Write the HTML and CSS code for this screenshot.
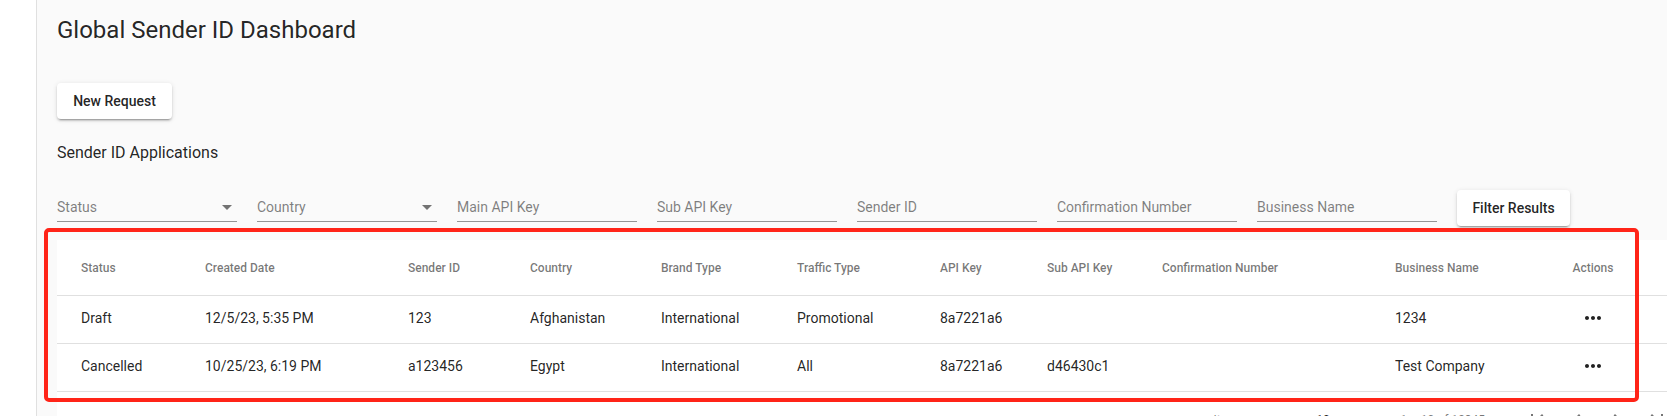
FILE: index.html
```html
<!DOCTYPE html>
<html lang="en">
<head>
<meta charset="utf-8">
<title>Global Sender ID Dashboard</title>
<link rel="stylesheet" href="styles.css">
</head>
<body>
<div class="app">
  <aside class="sidebar"></aside>
  <main class="main">
    <h1 class="title">Global Sender ID Dashboard</h1>
    <button class="raised-btn new-btn" type="button">New Request</button>
    <h2 class="subtitle">Sender ID Applications</h2>

    <div class="filters">
      <div class="field select-field"><span class="ph">Status</span><span class="arrow"></span></div>
      <div class="field select-field"><span class="ph">Country</span><span class="arrow"></span></div>
      <div class="field"><span class="ph">Main API Key</span></div>
      <div class="field"><span class="ph">Sub API Key</span></div>
      <div class="field"><span class="ph">Sender ID</span></div>
      <div class="field"><span class="ph">Confirmation Number</span></div>
      <div class="field"><span class="ph">Business Name</span></div>
      <button class="raised-btn filter-btn" type="button">Filter Results</button>
    </div>

    <div class="card">
      <table class="grid">
        <colgroup>
          <col class="c-status"><col class="c-created"><col class="c-sender"><col class="c-country">
          <col class="c-brand"><col class="c-traffic"><col class="c-api"><col class="c-subapi">
          <col class="c-conf"><col class="c-biz"><col class="c-actions"><col class="c-fill">
        </colgroup>
        <thead>
          <tr>
            <th>Status</th><th>Created Date</th><th>Sender ID</th><th>Country</th>
            <th>Brand Type</th><th>Traffic Type</th><th>API Key</th><th>Sub API Key</th>
            <th>Confirmation Number</th><th>Business Name</th><th class="center">Actions</th><th></th>
          </tr>
        </thead>
        <tbody>
          <tr>
            <td>Draft</td><td>12/5/23, 5:35 PM</td><td>123</td><td>Afghanistan</td>
            <td>International</td><td>Promotional</td><td>8a7221a6</td><td></td>
            <td></td><td>1234</td>
            <td class="center"><svg class="more" viewBox="0 0 24 24" width="24" height="24"><path d="M6 10c-1.1 0-2 .9-2 2s.9 2 2 2 2-.9 2-2-.9-2-2-2zm12 0c-1.1 0-2 .9-2 2s.9 2 2 2 2-.9 2-2-.9-2-2-2zm-6 0c-1.1 0-2 .9-2 2s.9 2 2 2 2-.9 2-2-.9-2-2-2z"/></svg></td><td></td>
          </tr>
          <tr>
            <td>Cancelled</td><td>10/25/23, 6:19 PM</td><td>a123456</td><td>Egypt</td>
            <td>International</td><td>All</td><td>8a7221a6</td><td>d46430c1</td>
            <td></td><td>Test Company</td>
            <td class="center"><svg class="more" viewBox="0 0 24 24" width="24" height="24"><path d="M6 10c-1.1 0-2 .9-2 2s.9 2 2 2 2-.9 2-2-.9-2-2-2zm12 0c-1.1 0-2 .9-2 2s.9 2 2 2 2-.9 2-2-.9-2-2-2zm-6 0c-1.1 0-2 .9-2 2s.9 2 2 2 2-.9 2-2-.9-2-2-2z"/></svg></td><td></td>
          </tr>
        </tbody>
      </table>
      <div class="paginator">
        <span class="pg-label">Items per page:</span>
        <span class="pg-select">10<span class="arrow small"></span></span>
        <span class="pg-range">1 – 10 of 12345</span>
        <span class="pg-btn"><svg viewBox="0 0 24 24" width="24" height="24"><path d="M18.41 16.59L13.82 12l4.59-4.59L17 6l-6 6 6 6zM6 6h2v12H6z"/></svg></span>
        <span class="pg-btn"><svg viewBox="0 0 24 24" width="24" height="24"><path d="M15.41 7.41L14 6l-6 6 6 6 1.41-1.41L10.83 12z"/></svg></span>
        <span class="pg-btn"><svg viewBox="0 0 24 24" width="24" height="24"><path d="M10 6L8.59 7.41 13.17 12l-4.58 4.59L10 18l6-6z"/></svg></span>
        <span class="pg-btn"><svg viewBox="0 0 24 24" width="24" height="24"><path d="M5.59 7.41L10.18 12l-4.59 4.59L7 18l6-6-6-6zM16 6h2v12h-2z"/></svg></span>
      </div>
    </div>
  </main>
  <div class="highlight"></div>
</div>
</body>
</html>
```
FILE: styles.css
```css
html, body {
  margin: 0;
  padding: 0;
  overflow: hidden;
  background: #fafafa;
}
body {
  font-family: Roboto, "Helvetica Neue", Arial, sans-serif;
  color: rgba(0, 0, 0, 0.87);
}
.app {
  position: relative;
  display: flex;
  min-height: 100vh;
}
.sidebar {
  flex: none;
  width: 36px;
  background: #ffffff;
  border-right: 1px solid #e0e0e0;
}
.main {
  flex: none;
  padding-left: 20px;
  width: 1643px;
}
.title {
  margin: 0;
  padding-top: 14px;
  font-size: 24px;
  font-weight: 400;
  line-height: 32px;
}
.raised-btn {
  display: block;
  flex: none;
  height: 36px;
  padding: 0 16px;
  border: none;
  border-radius: 4px;
  background: #ffffff;
  font-family: Roboto, Arial, sans-serif;
  font-size: 14px;
  font-weight: 500;
  white-space: nowrap;
  color: rgba(0, 0, 0, 0.87);
  box-shadow: 0 3px 1px -2px rgba(0,0,0,.2), 0 2px 2px 0 rgba(0,0,0,.14), 0 1px 5px 0 rgba(0,0,0,.12);
  cursor: pointer;
}
.new-btn {
  margin-top: 37px;
  width: 115px;
}
.subtitle {
  margin: 22px 0 0;
  font-size: 16px;
  font-weight: 400;
  line-height: 24px;
}
.filters {
  margin-top: 25px;
  display: flex;
  align-items: flex-start;
}
.field {
  position: relative;
  flex: none;
  width: 180px;
  margin-right: 20px;
  padding: 7px 0 4px;
  border-bottom: 1px solid #949494;
  font-size: 14px;
  line-height: 20px;
}
.ph {
  color: rgba(0, 0, 0, 0.5);
}
.arrow {
  position: absolute;
  right: 5px;
  top: 15px;
  width: 0;
  height: 0;
  border-left: 5px solid transparent;
  border-right: 5px solid transparent;
  border-top: 5px solid rgba(0, 0, 0, 0.54);
}
.filter-btn {
  width: 113px;
  padding: 0;
}
.card {
  margin-top: 14px;
  background: #ffffff;
  width: 1643px;
}
.grid {
  width: 1643px;
  table-layout: fixed;
  border-collapse: collapse;
}
.c-status { width: 148px; }
.c-created { width: 203px; }
.c-sender { width: 122px; }
.c-country { width: 131px; }
.c-brand { width: 136px; }
.c-traffic { width: 143px; }
.c-api { width: 107px; }
.c-subapi { width: 115px; }
.c-conf { width: 233px; }
.c-biz { width: 153px; }
.c-actions { width: 90px; }
.c-fill { width: 62px; }
.grid th, .grid td {
  padding: 0;
  text-align: left;
  vertical-align: middle;
  border-bottom: 1px solid #e0e0e0;
  white-space: nowrap;
}
.grid th:first-child, .grid td:first-child {
  padding-left: 24px;
}
.grid th {
  height: 55px;
  font-size: 12px;
  font-weight: 500;
  color: rgba(0, 0, 0, 0.54);
}
.grid td {
  height: 44px;
  padding-bottom: 3px;
  font-size: 14px;
  font-weight: 400;
  color: rgba(0, 0, 0, 0.87);
}
.grid .center {
  text-align: center;
}
.more {
  display: block;
  margin: 0 auto;
  fill: rgba(0, 0, 0, 0.87);
}
.paginator {
  display: flex;
  align-items: center;
  justify-content: flex-end;
  height: 56px;
  padding-right: 23px;
  font-size: 12px;
  color: rgba(0, 0, 0, 0.54);
}
.pg-label {
  margin-right: 8px;
}
.pg-select {
  position: relative;
  width: 56px;
  margin: 0 4px 0 12px;
  color: rgba(0, 0, 0, 0.87);
}
.arrow.small {
  top: 5px;
  right: 0;
}
.pg-range {
  margin: 0 32px 0 24px;
}
.pg-btn {
  display: flex;
  align-items: center;
  justify-content: center;
  width: 40px;
  height: 40px;
}
.pg-btn svg {
  fill: rgba(0, 0, 0, 0.54);
}
.highlight {
  position: absolute;
  left: 44px;
  top: 228px;
  width: 1595px;
  height: 174px;
  box-sizing: border-box;
  border: 4px solid #ff2418;
  border-radius: 5px;
  pointer-events: none;
}
```
